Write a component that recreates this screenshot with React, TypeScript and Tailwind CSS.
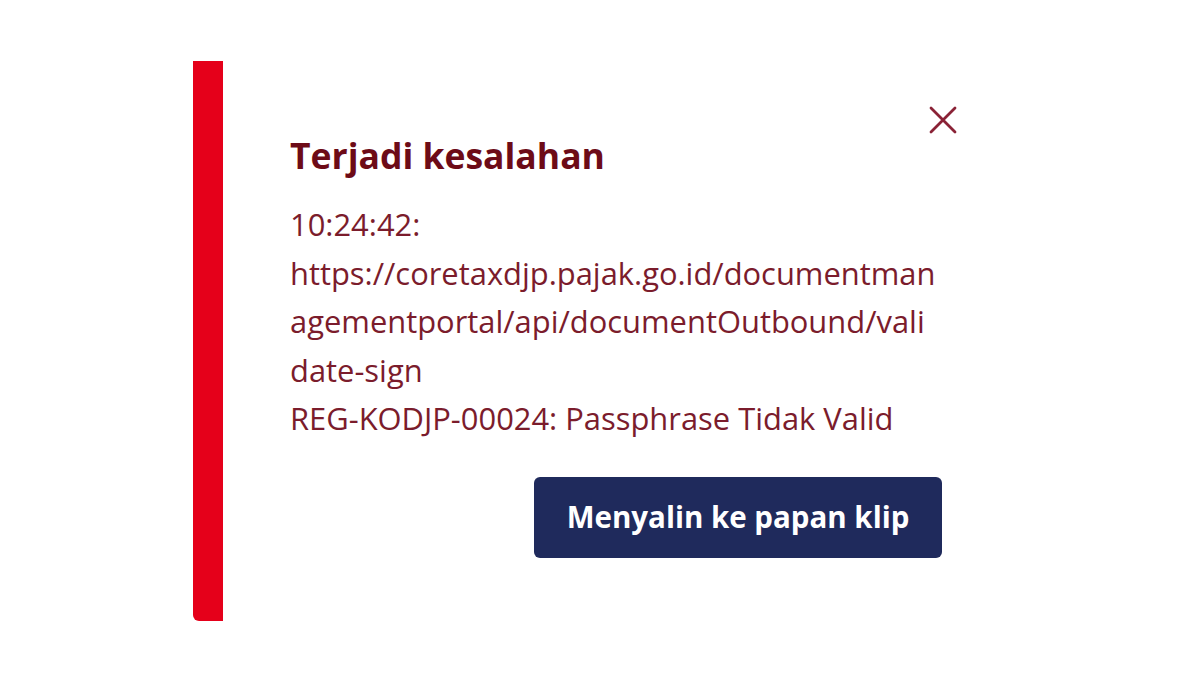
import React from "react";

export default function App() {
  const lines = [
    "10:24:42:",
    "https://coretaxdjp.pajak.go.id/documentman",
    "agementportal/api/documentOutbound/vali",
    "date-sign",
    "REG-KODJP-00024: Passphrase Tidak Valid",
  ];
  return (
    <div
      className="w-[1200px] h-[675px] bg-white pt-[61px] pl-[193px]"
      style={{ fontFamily: '"Open Sans", "Noto Sans", sans-serif' }}
    >
      <div className="w-[812px] h-[560px] flex bg-white">
        <div className="w-[30px] shrink-0 bg-[#e5001a] rounded-bl-md" />
        <div className="flex-1 relative pl-[67px] pr-[63px] pt-[74px]">
          <button
            aria-label="Tutup"
            className="absolute top-[45px] right-[48px] w-[28px] h-[28px] flex items-center justify-center"
          >
            <svg width="28" height="28" viewBox="0 0 28 28" fill="none">
              <path
                d="M2 2 L26 26 M26 2 L2 26"
                stroke="#8a2236"
                strokeWidth="2.8"
                strokeLinecap="round"
              />
            </svg>
          </button>
          <h2 className="text-[35.5px] leading-[40px] font-bold text-[#6d0b17]">
            Terjadi kesalahan
          </h2>
          <div className="mt-[25px] text-[30.9px] leading-[48.5px] text-[#7b1c2c]">
            {lines.map((l) => (
              <div key={l} className="whitespace-nowrap">
                {l}
              </div>
            ))}
          </div>
          <div className="flex justify-end mt-[34px]">
            <button className="w-[408px] h-[81px] rounded-md bg-[#1f2a5c] text-white text-[29.5px] font-bold flex items-center justify-center">
              Menyalin ke papan klip
            </button>
          </div>
        </div>
      </div>
    </div>
  );
}
